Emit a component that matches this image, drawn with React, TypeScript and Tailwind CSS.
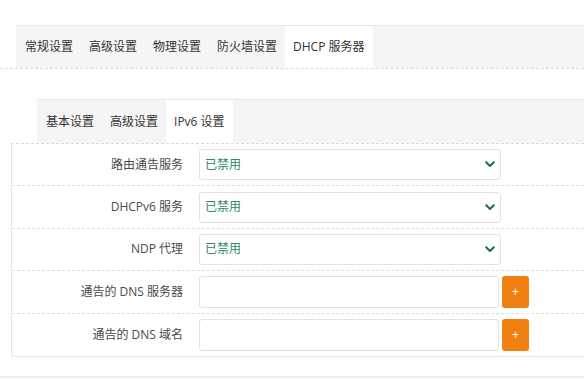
import React from "react";

const font = { fontFamily: '"Open Sans", "Noto Sans CJK SC", sans-serif' };

function Chevron() {
  return (
    <svg width="10" height="7" viewBox="0 0 10 7" className="shrink-0">
      <path d="M1.2 1.2 L5 5 L8.8 1.2" fill="none" stroke="#1e6e50" strokeWidth="2" strokeLinecap="round" strokeLinejoin="round" />
    </svg>
  );
}

function SelectRow({ label }: { label: string }) {
  return (
    <div className="flex h-[42.4px] items-center border-b border-dashed border-[#dedede]">
      <div className="w-[179px] shrink-0 pr-[8px] text-right text-[12px] text-[#4a4a4a]">{label}</div>
      <div className="ml-[8px] flex h-[31px] w-[302px] items-center justify-between rounded-[3px] border border-[#e2e2e2] bg-white pl-[5px] pr-[5px]">
        <span className="text-[12px] text-[#2f8a62]">已禁用</span>
        <Chevron />
      </div>
    </div>
  );
}

function DnsRow({ label, last }: { label: string; last?: boolean }) {
  return (
    <div className={`flex h-[42.4px] items-center ${last ? "" : "border-b border-dashed border-[#dedede]"}`}>
      <div className="w-[179px] shrink-0 pr-[8px] text-right text-[12px] text-[#4a4a4a]">{label}</div>
      <div className="ml-[8px] h-[32px] w-[300px] rounded-[3px] border border-[#e2e2e2] bg-white" />
      <div className="ml-[3px] flex h-[32px] w-[27px] items-center justify-center rounded-[3px] bg-[#f0800f] text-[13px] text-white">
        +
      </div>
    </div>
  );
}

export default function App() {
  const topTabs = ["常规设置", "高级设置", "物理设置", "防火墙设置"];
  const subTabs = ["基本设置", "高级设置"];
  return (
    <div className="h-[383px] w-[584px] overflow-hidden bg-white text-[#333]" style={font}>
      <div className="pt-[25px]">
        <div className="border-b border-dashed border-[#dcdcdc]">
          <div className="ml-[16px] flex h-[43px] items-stretch border-t border-[#e6e6e6] bg-[#f5f5f5]">
            <div className="w-[1px]" />
            {topTabs.map((t) => (
              <div key={t} className="flex items-center px-[8px] text-[12px] text-[#333]">
                {t}
              </div>
            ))}
            <div className="flex items-center bg-white px-[8px] text-[12px] text-[#333]">DHCP 服务器</div>
          </div>
        </div>
      </div>

      <div className="border-b-2 border-[#ececec] pb-[19px] pt-[30px]">
        <div className="ml-[37px] flex h-[44px] items-stretch border-t border-[#e6e6e6] bg-[#f5f5f5]">
          <div className="w-[1px]" />
          {subTabs.map((t) => (
            <div key={t} className="flex items-center px-[8px] text-[12px] text-[#333]">
              {t}
            </div>
          ))}
          <div className="flex items-center bg-white px-[8px] text-[12px] text-[#333]">IPv6 设置</div>
        </div>
        <div className="ml-[11px] rounded-bl-[3px] border-b border-l border-t border-[#e6e6e6] border-t-[#dcdcdc] [border-top-style:dashed]">
          <SelectRow label="路由通告服务" />
          <SelectRow label="DHCPv6 服务" />
          <SelectRow label="NDP 代理" />
          <DnsRow label="通告的 DNS 服务器" />
          <DnsRow label="通告的 DNS 域名" last />
        </div>
      </div>
    </div>
  );
}
